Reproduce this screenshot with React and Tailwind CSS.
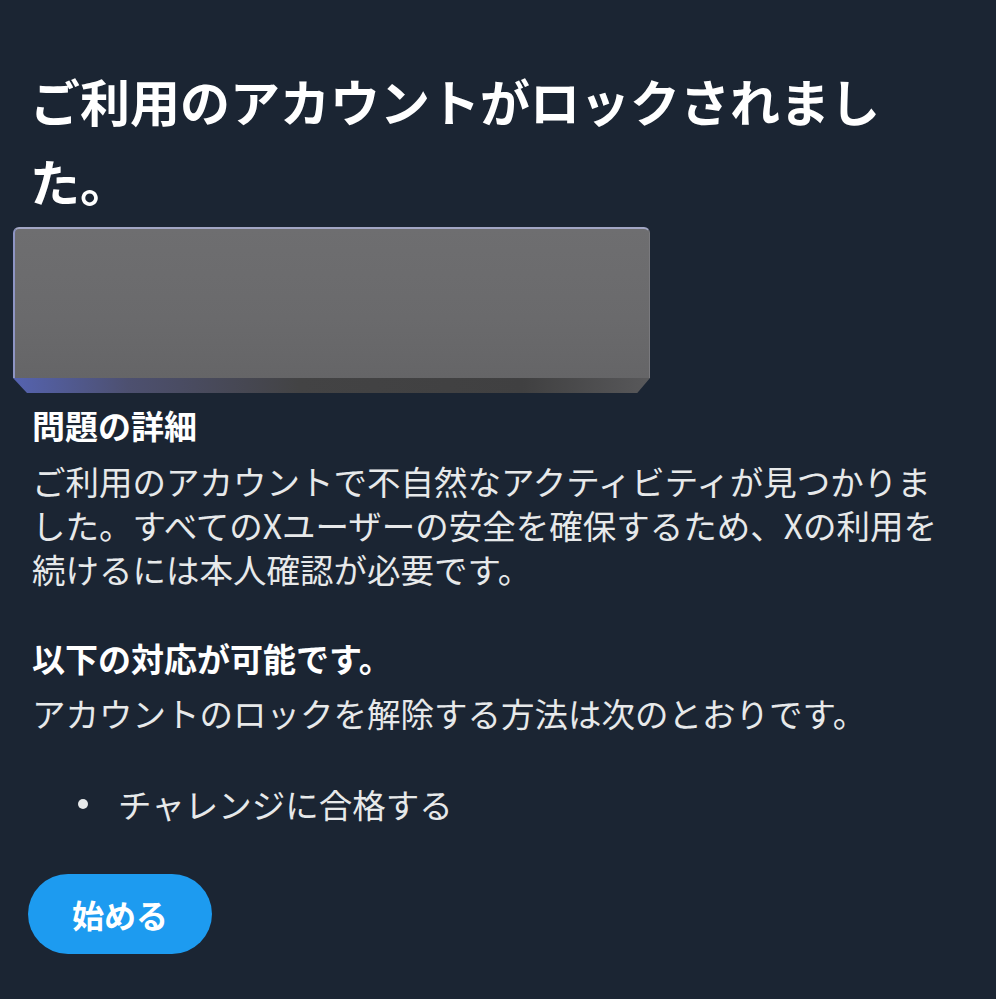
export default function App() {
  return (
    <div className="min-h-[999px] w-full bg-[#1b2533] px-8 pt-[60px] text-[#e7e9ea]">
      <div className="font-['Noto_Sans_CJK_JP','Noto_Sans',sans-serif]">
        <h1 className="-ml-[2px] text-[50px] font-bold leading-[80px] text-white">
          ご利用のアカウントがロックされまし
          <br />
          た。
        </h1>

        <div className="-ml-[19px] mt-[7px] flex h-[166px] w-[637px] flex-col">
          <div className="flex-1 rounded-t-[6px] border-l-2 border-t-2 border-r border-l-[#8e95c4] border-t-[#a2a6c4] border-r-[#7a7a7e] bg-[linear-gradient(180deg,#6e6e70_0%,#6a6a6c_60%,#656567_100%)]" />
          <div className="h-[15px] bg-[linear-gradient(90deg,#5563b0_0%,#4d5070_18%,#434344_45%,#404041_80%,#58585a_100%)] [clip-path:polygon(0_0,100%_0,98%_100%,2.2%_100%)]" />
        </div>

        <h2 className="mt-[10px] text-[33px] font-bold leading-[44px] text-white">
          問題の詳細
        </h2>
        <p className="mt-[12px] text-[33.5px] leading-[44px] whitespace-nowrap">
          ご利用のアカウントで不自然なアクティビティが見つかりま
          <br />
          した。すべてのXユーザーの安全を確保するため、Xの利用を
          <br />
          続けるには本人確認が必要です。
        </p>

        <h2 className="mt-[45px] text-[33px] font-bold leading-[44px] text-white">
          以下の対応が可能です。
        </h2>
        <p className="mt-[11px] text-[33.5px] leading-[44px] whitespace-nowrap">
          アカウントのロックを解除する方法は次のとおりです。
        </p>

        <ul className="mt-[47px] pl-[46px]">
          <li className="flex items-center text-[33.5px] leading-[44px]">
            <span className="mr-[30px] h-[10px] w-[10px] rounded-full bg-[#e7e9ea]" />
            チャレンジに合格する
          </li>
        </ul>

        <button className="mt-[48px] -ml-[4px] flex h-[80px] items-center rounded-full bg-[#1d9bf0] px-[44px] text-[32px] font-bold text-white">
          始める
        </button>
      </div>
    </div>
  );
}
